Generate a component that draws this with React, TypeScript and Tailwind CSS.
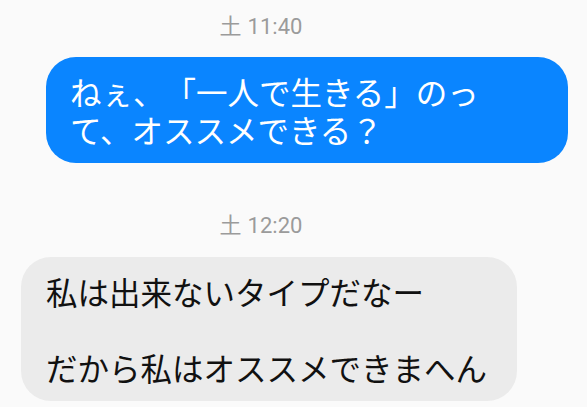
import React from "react";

interface StampProps {
  day: string;
  time: string;
}

const Stamp = ({ day, time }: StampProps) => (
  <div className="flex w-[522px] justify-center h-[28px] leading-[28px] text-[22px] text-[#9b9b9b] font-['Roboto','Noto_Sans_CJK_JP',sans-serif]">
    <span>{day}</span>
    <span className="ml-[6px]">{time}</span>
  </div>
);

const App = () => {
  return (
    <div className="w-[587px] h-[407px] overflow-hidden bg-[#fafafa] pt-[13px] font-['Noto_Sans_CJK_JP',sans-serif] [text-spacing-trim:space-all]">
      <Stamp day="土" time="11:40" />

      <div className="ml-[46px] mt-[16px] w-[522px] rounded-[30px] bg-[#0a85ff] pl-[24px] py-[15px] text-[31.5px] leading-[38px] text-white whitespace-nowrap">
        ねぇ、「一人で生きる」のっ
        <br />
        て、オススメできる？
      </div>

      <div className="mt-[49px]">
        <Stamp day="土" time="12:20" />
      </div>

      <div className="ml-[21px] mt-[17px] w-[496px] rounded-[30px] bg-[#ebebeb] pl-[25px] py-[15px] text-[31.5px] leading-[38px] text-[#111111] whitespace-nowrap">
        私は出来ないタイプだなー
        <br />
        <br />
        だから私はオススメできまへん
      </div>
    </div>
  );
};

export default App;
